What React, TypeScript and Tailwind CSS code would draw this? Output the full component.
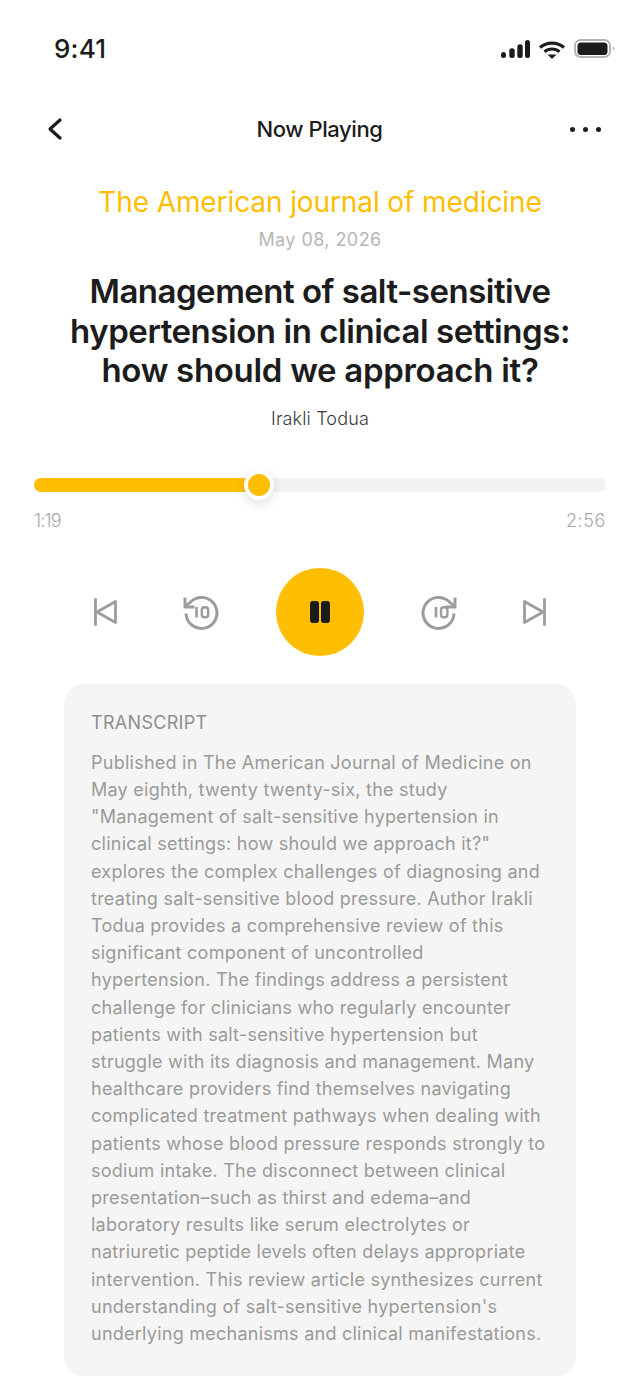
const lines = [
  "Published in The American Journal of Medicine on",
  "May eighth, twenty twenty-six, the study",
  "\"Management of salt-sensitive hypertension in",
  "clinical settings: how should we approach it?\"",
  "explores the complex challenges of diagnosing and",
  "treating salt-sensitive blood pressure. Author Irakli",
  "Todua provides a comprehensive review of this",
  "significant component of uncontrolled",
  "hypertension. The findings address a persistent",
  "challenge for clinicians who regularly encounter",
  "patients with salt-sensitive hypertension but",
  "struggle with its diagnosis and management. Many",
  "healthcare providers find themselves navigating",
  "complicated treatment pathways when dealing with",
  "patients whose blood pressure responds strongly to",
  "sodium intake. The disconnect between clinical",
  "presentation–such as thirst and edema–and",
  "laboratory results like serum electrolytes or",
  "natriuretic peptide levels often delays appropriate",
  "intervention. This review article synthesizes current",
  "understanding of salt-sensitive hypertension's",
  "underlying mechanisms and clinical manifestations.",
];

function Prev() {
  return (
    <svg width="24" height="28" viewBox="0 0 24 28" fill="none" stroke="#9c9c9a" strokeWidth="2.8" strokeLinecap="round" strokeLinejoin="round">
      <path d="M1.5 1.5V26.5" />
      <path d="M21.5 3.5V24.5L3 14Z" />
    </svg>
  );
}
function Next() {
  return (
    <svg width="24" height="28" viewBox="0 0 24 28" fill="none" stroke="#9c9c9a" strokeWidth="2.8" strokeLinecap="round" strokeLinejoin="round">
      <path d="M22.5 1.5V26.5" />
      <path d="M2.5 3.5V24.5L21 14Z" />
    </svg>
  );
}
function Back10() {
  return (
    <svg width="36" height="36" viewBox="0 0 36 36" fill="none">
      <path d="M3 19.5A15.5 15.5 0 1 0 8 7.5L3.5 11.5" stroke="#9c9c9a" strokeWidth="3" />
      <path d="M2 3.5V13H11.5" stroke="#9c9c9a" strokeWidth="3" />
      <path d="M13.5 13V23.5" stroke="#9c9c9a" strokeWidth="2.6" />
      <rect x="18.8" y="13.3" width="6.4" height="10" rx="2.8" stroke="#9c9c9a" strokeWidth="2.4" />
    </svg>
  );
}
function Fwd10() {
  return (
    <svg width="36" height="36" viewBox="0 0 36 36" fill="none">
      <path d="M33 19.5A15.5 15.5 0 1 1 28 7.5L32.5 11.5" stroke="#9c9c9a" strokeWidth="3" />
      <path d="M34 3.5V13H24.5" stroke="#9c9c9a" strokeWidth="3" />
      <path d="M15 13V23.5" stroke="#9c9c9a" strokeWidth="2.6" />
      <rect x="20" y="13.3" width="6.4" height="10" rx="2.8" stroke="#9c9c9a" strokeWidth="2.4" />
    </svg>
  );
}

export default function App() {
  return (
    <div className="w-[640px] h-[1376px] overflow-hidden bg-white font-['Inter',sans-serif] text-[#1c1c1c]">
      <div className="h-[96px] flex items-start justify-between pl-[54px] pr-[24px] pt-[33px]">
        <span className="text-[26px] leading-[32px] font-medium tracking-[0.2px]">9:41</span>
        <svg width="116" height="22" viewBox="0 0 116 22" className="mt-[5px]">
          <rect x="1" y="14" width="5" height="6" rx="2.5" fill="#1c1c1c" />
          <rect x="9.3" y="10.3" width="5.4" height="9.7" rx="2.5" fill="#1c1c1c" />
          <rect x="17.3" y="6.3" width="5.4" height="13.7" rx="2.5" fill="#1c1c1c" />
          <rect x="25" y="2" width="5" height="18" rx="2.5" fill="#1c1c1c" />
          <path d="M40 9.5a18.5 18.5 0 0 1 24 0" fill="none" stroke="#1c1c1c" strokeWidth="3.2" />
          <path d="M44.5 13.8a11.5 11.5 0 0 1 15 0" fill="none" stroke="#1c1c1c" strokeWidth="3.2" />
          <path d="M47.5 16.5h9L52 21z" fill="#1c1c1c" />
          <rect x="75" y="2" width="35" height="17" rx="5.5" fill="none" stroke="#b5b5b5" strokeWidth="2" />
          <rect x="77.5" y="4.5" width="30" height="12.5" rx="3.5" fill="#1c1c1c" />
          <path d="M112.7 8.5c1.2.5 1.5 1.2 1.5 2s-.3 1.5-1.5 2z" fill="#b5b5b5" />
        </svg>
      </div>

      <div className="h-[66px] flex items-center justify-between pl-[46px] pr-[38px]">
        <svg width="18" height="24" viewBox="0 0 18 24" fill="none" stroke="#1c1c1c" strokeWidth="3.2" strokeLinecap="round" strokeLinejoin="round" className="mr-[5px]">
          <path d="M14 3L4 12L14 21" />
        </svg>
        <span className="text-[22px] leading-[30px] font-medium tracking-[-0.4px]">Now Playing</span>
        <div className="flex gap-[8px] w-[32px]">
          <span className="size-[5px] rounded-full bg-[#1c1c1c]" />
          <span className="size-[5px] rounded-full bg-[#1c1c1c]" />
          <span className="size-[5px] rounded-full bg-[#1c1c1c]" />
        </div>
      </div>

      <div className="flex flex-col items-center text-center mt-[22px]">
        <div className="text-[28px] leading-[36px] text-[#ffbe00] tracking-[-0.1px]">The American journal of medicine</div>
        <div className="mt-[8px] text-[18px] leading-[24px] text-[#b6b6b6] tracking-[0.43px]">May 08, 2026</div>
        <div className="mt-[20px] text-[33px] leading-[39.6px] font-[560]">
          <div className="whitespace-nowrap tracking-[-0.5px]">Management of salt-sensitive</div>
          <div className="whitespace-nowrap tracking-[-0.45px]">hypertension in clinical settings:</div>
          <div className="whitespace-nowrap tracking-[-0.3px]">how should we approach it?</div>
        </div>
        <div className="mt-[15px] text-[18px] leading-[26px] text-[#3a3a3a] font-light tracking-[0.15px]">Irakli Todua</div>
      </div>

      <div className="mx-[34px] mt-[46px]">
        <div className="relative h-[14px] rounded-full bg-[#f2f2f0]">
          <div className="h-full w-[226px] rounded-full bg-[#ffbe00]" />
          <div className="absolute left-[210px] top-[-8px] size-[30px] rounded-full bg-[#ffbe00] border-4 border-white shadow-[0_4px_12px_rgba(0,0,0,0.12)]" />
        </div>
        <div className="flex justify-between mt-[16px] text-[18px] leading-[26px] text-[#a8a8a8] font-light">
          <span className="tracking-[-0.8px]">1:19</span>
          <span className="tracking-[0.6px]">2:56</span>
        </div>
      </div>

      <div className="flex items-center justify-center mt-[34px] h-[88px]">
        <Prev />
        <div className="ml-[65px]"><Back10 /></div>
        <div className="ml-[57px] size-[88px] rounded-full bg-[#ffbe00] flex items-center justify-center gap-[2px]">
          <span className="w-[9px] h-[22px] rounded-[3px] bg-[#1c1c1c]" />
          <span className="w-[9px] h-[22px] rounded-[3px] bg-[#1c1c1c]" />
        </div>
        <div className="ml-[57px]"><Fwd10 /></div>
        <div className="ml-[65px]"><Next /></div>
      </div>

      <div className="mx-[64px] mt-[28px] h-[692px] rounded-[20px] bg-[#f5f5f5] pl-[27px] pr-[20px] pt-[26px] text-[#9a9a98] text-[18px]">
        <div className="leading-[26px] tracking-[0.3px] text-[#8e8e8c]">TRANSCRIPT</div>
        <div className="mt-[13px] leading-[27.2px] tracking-[0.25px]">
          {lines.map((l) => (
            <div key={l} className="whitespace-nowrap">{l}</div>
          ))}
        </div>
      </div>
    </div>
  );
}
